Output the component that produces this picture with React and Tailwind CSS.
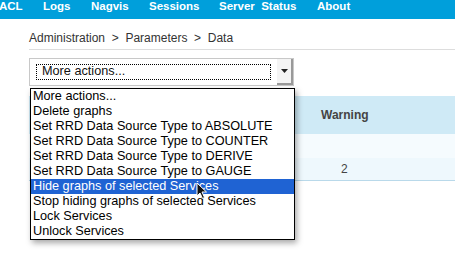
import React from 'react';

const navItems = [
  { label: 'ACL', w: 'w-[44px]' },
  { label: 'Logs', w: 'w-[48px]' },
  { label: 'Nagvis', w: 'w-[58px]' },
  { label: 'Sessions', w: 'w-[70px]' },
  { label: 'Server  Status', w: 'w-[98px]' },
  { label: 'About', w: 'w-[60px]' },
];

const options = [
  'More actions...',
  'Delete graphs',
  'Set RRD Data Source Type to ABSOLUTE',
  'Set RRD Data Source Type to COUNTER',
  'Set RRD Data Source Type to DERIVE',
  'Set RRD Data Source Type to GAUGE',
  'Hide graphs of selected Services',
  'Stop hiding graphs of selected Services',
  'Lock Services',
  'Unlock Services',
];

const Cursor = () => (
  <svg width="12" height="18" viewBox="0 0 12 18" className="absolute left-[196px] top-[182px]">
    <path d="M1 1 L1 14 L4 11 L6.5 16.5 L8.5 15.5 L6 10 L10.5 10 Z" fill="#111" stroke="#fff" strokeWidth="1" />
  </svg>
);

const App = () => {
  return (
    <div className="relative w-[455px] h-[261px] overflow-hidden bg-white font-['Liberation_Sans',Arial,sans-serif]">
      <div className="h-[19px] bg-[#009fdb] flex items-center -ml-[1px] text-white font-bold text-[11.5px]">
        {navItems.map((n) => (
          <span key={n.label} className={`${n.w} whitespace-pre leading-none -mt-[5px]`}>
            {n.label}
          </span>
        ))}
      </div>

      <div className="pl-[29px]">
        <div className="h-[30px] flex items-center pt-[8px] text-[12px] text-[#333] whitespace-pre">
          Administration  &gt;  Parameters  &gt;  Data
        </div>
        <div className="h-px bg-[#ddd]" />

        <div className="mt-[8px] w-[265px] h-[28px] border border-[#c8c8c8] bg-white flex items-center">
          <div className="ml-[6px] w-[235px] h-[16px] border border-dotted border-black flex items-center text-[12.7px] text-[#111] pl-[5px]">
            More actions...
          </div>
          <div className="ml-auto w-[16px] h-[26px] bg-[#f4f4f4] border-r-2 border-b-2 border-[#999] flex items-center justify-center">
            <svg width="7" height="4" viewBox="0 0 7 4">
              <path d="M0 0 H7 L3.5 4 Z" fill="#222" />
            </svg>
          </div>
        </div>

        <div className="mt-[10px] -mr-[1px]">
          <div className="h-[38px] bg-[#cfeaf6] flex items-center">
            <span className="ml-[292px] text-[12px] font-bold text-[#444]">Warning</span>
          </div>
          <div className="h-[24px] bg-[#f5fbfe]" />
          <div className="h-[23px] bg-[#eef8fd] border-b border-[#b9d9ea] flex items-center">
            <span className="ml-[312px] text-[12px] text-[#444]">2</span>
          </div>
        </div>
      </div>

      <div className="absolute left-[30px] top-[88px] w-[265px] bg-white border border-black shadow-[2px_3px_6px_rgba(0,0,0,0.35)]">
        {options.map((o, i) => (
          <div
            key={o}
            className={`h-[15px] leading-[15px] pl-[2px] text-[12.7px] whitespace-nowrap ${
              i === 6 ? 'bg-[#1f63d3] text-white' : 'text-black'
            }`}
          >
            {o}
          </div>
        ))}
      </div>

      <Cursor />
    </div>
  );
};

export default App;
